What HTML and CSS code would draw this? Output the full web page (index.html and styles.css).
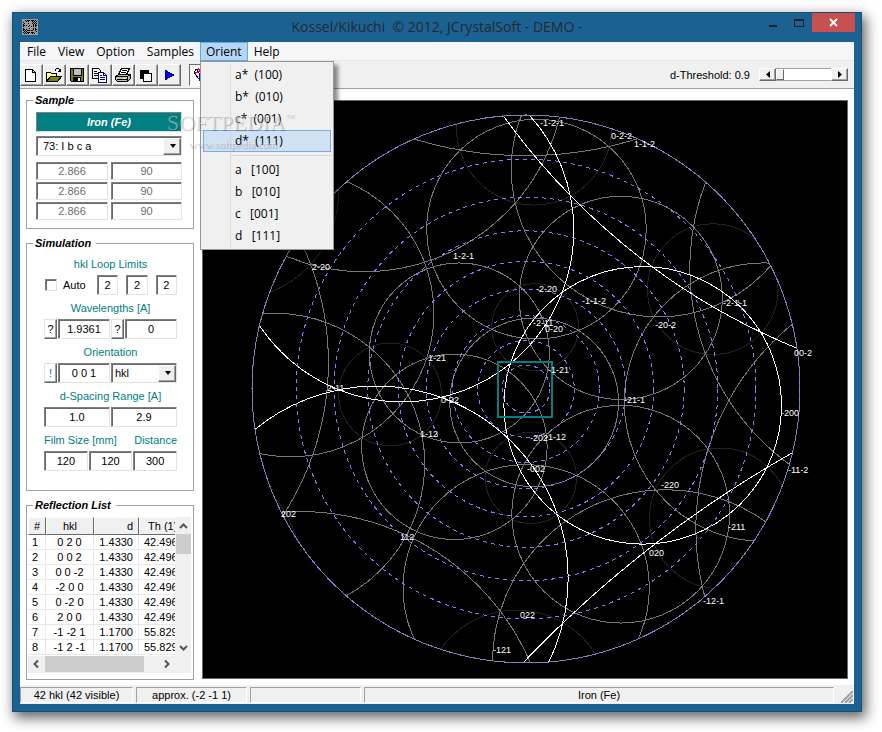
FILE: index.html
```html
<!DOCTYPE html>
<html lang="en">
<head>
<meta charset="utf-8">
<title>Kossel/Kikuchi</title>
<link rel="stylesheet" href="styles.css">
</head>
<body>
<div class="window">
  <header class="titlebar">
    <svg class="app-icon" viewBox="0 0 16 16" width="16" height="16" shape-rendering="crispEdges" aria-hidden="true">
      <rect width="16" height="16" fill="#000"/>
      <g fill="none" stroke="#9a9a9a">
        <rect x=".5" y=".5" width="15" height="15"/>
        <path d="M0 8.500H16M8.500 0V16M1 1L15 15M15 1L1 15"/>
        <circle cx="8" cy="8" r="5"/><circle cx="8" cy="8" r="2.500"/>
        <path stroke-dasharray="1 1" d="M4.500 1V15M12.500 1V15M1 4.500H15M1 12.500H15M2.500 1V15M14 1V15M1 2.500H15M1 14H15"/>
      </g>
    </svg>
    <h1 class="title">Kossel/Kikuchi&nbsp; © 2012, JCrystalSoft - DEMO -</h1>
    <div class="window-buttons">
      <button type="button" aria-label="Minimize"><svg width="10" height="14"><rect x="1" y="9" width="8" height="2" fill="#222"/></svg></button>
      <button type="button" aria-label="Maximize"><svg width="10" height="14"><path d="M0 3.500H10M.5 3V10.500H9.500V3M0 4.500H10" fill="none" stroke="#222" shape-rendering="crispEdges"/></svg></button>
      <button type="button" class="close" aria-label="Close"><svg width="9" height="9" viewBox="0 0 9 9"><path d="M1 1L8 8M8 1L1 8" stroke="#fff" stroke-width="1.800"/></svg></button>
    </div>
  </header>

  <nav class="menubar">
    <button type="button">File</button>
    <button type="button">View</button>
    <button type="button">Option</button>
    <button type="button">Samples</button>
    <div class="menu-anchor">
      <button type="button" class="open" aria-expanded="true">Orient</button>
      <div class="dropdown" role="menu">
        <button type="button" role="menuitem">a*&nbsp; (100)</button>
        <button type="button" role="menuitem">b*&nbsp; (010)</button>
        <button type="button" role="menuitem">c*&nbsp; (001)</button>
        <button type="button" role="menuitem" class="hot">d*&nbsp; (111)</button>
        <hr>
        <button type="button" role="menuitem">a&nbsp;&nbsp; [100]</button>
        <button type="button" role="menuitem">b&nbsp;&nbsp; [010]</button>
        <button type="button" role="menuitem">c&nbsp;&nbsp; [001]</button>
        <button type="button" role="menuitem">d&nbsp;&nbsp; [111]</button>
      </div>
    </div>
    <button type="button">Help</button>
  </nav>

  <div class="toolbar">
    <div class="tools">
      <button type="button" aria-label="New"><svg width="16" height="16" shape-rendering="crispEdges"><path d="M2.500 2.500H9.500L12.500 5.500V14.500H2.500Z" fill="#fff" stroke="#000"/><path d="M9.500 2.500V5.500H12.500" fill="none" stroke="#000"/></svg></button>
      <button type="button" aria-label="Open"><svg width="16" height="16" shape-rendering="crispEdges"><path d="M.5 14.500V5.500H4.500L5.500 6.500H10.500V9" fill="#ffff80" stroke="#000"/><path d="M.5 14.500L4.500 9.500H15.500L11.500 14.500Z" fill="#808000" stroke="#000"/><path d="M9 3.500L10.500 1.500H12.500L14.500 4M12 4.500H15M14.500 2V5" fill="none" stroke="#000"/></svg></button>
      <button type="button" aria-label="Save"><svg width="16" height="16" shape-rendering="crispEdges"><path d="M1.500 1.500H14.500V14.500H2.500L1.500 13.500Z" fill="#808000" stroke="#000"/><rect x="4" y="1" width="8" height="7" fill="#c0c0c0" stroke="#000"/><rect x="4" y="10" width="8" height="5"/><rect x="9" y="11" width="2" height="3" fill="#fff"/></svg></button>
      <button type="button" aria-label="Copy"><svg width="16" height="16" shape-rendering="crispEdges"><path d="M.5 1.500H6.500L8.500 3.500V11.500H.5Z" fill="#fff" stroke="#000"/><path d="M2 4.500H5M2 6.500H7M2 8.500H7" stroke="#000"/><path d="M6.500 5.500H11.500L14.500 8.500V15.500H6.500Z" fill="#fff" stroke="#000080"/><path d="M11.500 5.500V8.500H14.500" fill="none" stroke="#000080"/><path d="M8 8.500H10M8 10.500H13M8 12.500H13" stroke="#000080"/></svg></button>
      <button type="button" aria-label="Print"><svg width="17" height="16" shape-rendering="crispEdges"><path d="M6.500 1.500H14.500L11.500 7.500H3.500Z" fill="#fff" stroke="#000"/><path d="M7 3.500H12M6 5.500H11" stroke="#000"/><path d="M.5 9.500L3.500 7.500H15.500V11.500L12.500 14.500H2.500L.5 12.500Z" fill="#c0c0c0" stroke="#000"/><path d="M.5 9.500H12.500V14M12.500 9.500L15 7.500M2 12.500H12" fill="none" stroke="#000"/><rect x="8" y="11" width="3" height="1" fill="#ff0"/></svg></button>
      <button type="button" aria-label="Invert"><svg width="16" height="16" shape-rendering="crispEdges"><rect x="2" y="3" width="9" height="9"/><rect x="5.500" y="6.500" width="8" height="8" fill="#fff" stroke="#000"/></svg></button>
      <button type="button" aria-label="Run"><svg width="16" height="16" shape-rendering="crispEdges"><path d="M4.500 3.500L12.500 8L4.500 12.500Z" fill="#00f" stroke="#000080"/></svg></button>
    </div>
    <button type="button" class="tool-down" aria-label="Net"><svg width="16" height="16" shape-rendering="crispEdges"><path d="M3 2.500H16M3.500 2L2.500 6L6 11L12 15.500" fill="none" stroke="#000"/><path d="M3 6L8 4L14 14M6 2L14 8" fill="none" stroke="red" stroke-width="1.500"/><path d="M5 3L8 8L7 14M12 2L8 8" fill="none" stroke="#00f"/></svg></button>
    <div class="threshold">
      <label for="threshold">d-Threshold: 0.9</label>
      <div class="scroller">
        <button type="button" class="step" aria-label="Decrease"><svg width="4" height="7"><path d="M4 0V7L0 3.500Z"/></svg></button>
        <input type="range" id="threshold" min="0" max="100" value="0">
        <button type="button" class="step" aria-label="Increase"><svg width="4" height="7"><path d="M0 0V7L4 3.500Z"/></svg></button>
      </div>
    </div>
  </div>

  <main class="content">
    <div class="sidebar">
      <fieldset class="sample">
        <legend>Sample</legend>
        <div class="sample-name">Iron (Fe)</div>
        <div class="combo"><select aria-label="Space group"><option>73: I b c a</option></select></div>
        <div class="cell-grid">
          <input aria-label="a" value="2.866" disabled><input aria-label="alpha" value="90" disabled>
          <input aria-label="b" value="2.866" disabled><input aria-label="beta" value="90" disabled>
          <input aria-label="c" value="2.866" disabled><input aria-label="gamma" value="90" disabled>
        </div>
      </fieldset>

      <fieldset class="simulation">
        <legend>Simulation</legend>
        <div class="caption">hkl Loop Limits</div>
        <div class="row limits">
          <label class="auto"><input type="checkbox">Auto</label>
          <input aria-label="h limit" value="2"><input aria-label="k limit" value="2"><input aria-label="l limit" value="2">
        </div>
        <div class="caption">Wavelengths [A]</div>
        <div class="row">
          <button type="button">?</button><input aria-label="Wavelength 1" value="1.9361">
          <button type="button">?</button><input aria-label="Wavelength 2" value="0">
        </div>
        <div class="caption">Orientation</div>
        <div class="row">
          <button type="button" class="blue">!</button><input class="orient" aria-label="Orientation" value="0 0 1">
          <div class="combo"><select aria-label="Orientation mode"><option>hkl</option></select></div>
        </div>
        <div class="caption">d-Spacing Range [A]</div>
        <div class="row">
          <input aria-label="d minimum" value="1.0"><input aria-label="d maximum" value="2.9">
        </div>
        <div class="caption split"><span>Film Size [mm]</span><span>Distance</span></div>
        <div class="row">
          <input aria-label="Film width" value="120"><input aria-label="Film height" value="120"><input aria-label="Distance" value="300">
        </div>
      </fieldset>

      <fieldset class="reflections">
        <legend>Reflection List</legend>
        <div class="list">
          <div class="table-view">
            <table>
              <colgroup><col class="c-num"><col class="c-hkl"><col class="c-d"><col class="c-th"></colgroup>
              <thead><tr><th>#</th><th>hkl</th><th class="right">d</th><th>Th (1)</th></tr></thead>
              <tbody>
                <tr><td>1</td><td>0 2 0</td><td>1.4330</td><td>42.496</td></tr>
                <tr><td>2</td><td>0 0 2</td><td>1.4330</td><td>42.496</td></tr>
                <tr><td>3</td><td>0 0 -2</td><td>1.4330</td><td>42.496</td></tr>
                <tr><td>4</td><td>-2 0 0</td><td>1.4330</td><td>42.496</td></tr>
                <tr><td>5</td><td>0 -2 0</td><td>1.4330</td><td>42.496</td></tr>
                <tr><td>6</td><td>2 0 0</td><td>1.4330</td><td>42.496</td></tr>
                <tr><td>7</td><td>-1 -2 1</td><td>1.1700</td><td>55.829</td></tr>
                <tr><td>8</td><td>-1 2 -1</td><td>1.1700</td><td>55.829</td></tr>
              </tbody>
            </table>
          </div>
          <div class="vscroll">
            <svg width="9" height="17"><path d="M1 11L4.500 7.500L8 11" fill="none" stroke="#555" stroke-width="2"/></svg>
            <div class="vthumb"></div>
            <svg class="end" width="9" height="17"><path d="M1 7L4.500 10.500L8 7" fill="none" stroke="#555" stroke-width="2"/></svg>
          </div>
          <div class="hscroll">
            <svg width="17" height="16"><path d="M10 4.500L6.500 8L10 11.500" fill="none" stroke="#555" stroke-width="2"/></svg>
            <div class="hthumb"></div>
            <svg class="end" width="17" height="16"><path d="M7 4.500L10.500 8L7 11.500" fill="none" stroke="#555" stroke-width="2"/></svg>
          </div>
        </div>
      </fieldset>
    </div>

    <div class="canvas">
      <svg id="pattern" viewBox="203 101 644 577" role="img" aria-label="Kossel pattern">
        <clipPath id="hemisphere"><circle cx="526" cy="389" r="274"/></clipPath>
        <g id="cones" clip-path="url(#hemisphere)"></g>
        <g id="grid"></g>
        <rect class="film" x="498" y="362" width="54" height="55"/>
        <g id="labels"></g>
      </svg>
    </div>
  </main>

  <footer class="statusbar">
    <div class="status">42 hkl (42 visible)</div>
    <div class="status">approx. (-2 -1 1)</div>
    <div class="status"></div>
    <div class="status wide">Iron (Fe)</div>
    <svg class="grip" width="12" height="12"><path d="M0 12L12 0M4 12L12 4M8 12L12 8" stroke="#a0a0a0" stroke-width="2"/></svg>
  </footer>
  <div class="watermark"><b>SOFTPEDIA<sup>™</sup></b><span>www.softpedia.com</span></div>
</div>
<script src="pattern.js"></script>
</body>
</html>
```
FILE: styles.css
```css
* { box-sizing: border-box; }
body {
  margin: 0;
  padding: 12px 20px 20px 12px;
  background: #fff;
  font: 11px/14px "Liberation Sans", Arial, sans-serif;
  color: #000;
}
button, input, select { font: inherit; color: inherit; margin: 0; padding: 0; border-radius: 0; }
button { border: 0; background: none; }
svg { display: block; }

.window {
  position: relative;
  display: flex;
  flex-direction: column;
  min-height: calc(100vh - 32px);
  padding: 0 8px 8px;
  background: #1b6293;
  box-shadow: inset 0 0 0 1px #164f78, 3px 5px 12px 1px rgba(0, 0, 0, .6);
}

.titlebar { display: grid; grid-template-columns: 1fr auto 1fr; height: 30px; }
.app-icon { margin: 7px 0 0 2px; }
.title {
  margin: 0;
  font: 14px/30px "Open Sans", "Noto Sans", sans-serif;
  color: #222a30;
}
.window-buttons { display: flex; justify-content: flex-end; align-items: flex-start; padding-top: 1px; margin-right: -1px; }
.window-buttons button { display: grid; place-items: center; width: 26px; height: 19px; }
.window-buttons .close { width: 43px; background: #c75050; }

.menubar { display: flex; height: 19px; padding-left: 1px; background: #f5f6f8; border-bottom: 1px solid #e6e6e6; font: 12px/18px "Open Sans", "Noto Sans", sans-serif; }
.menubar > button, .open { height: 19px; padding: 0 6px; }
.open { border: 1px solid #66a7e8; padding: 0 5px; background: #b5d7f7; line-height: 16px; }
.menu-anchor { position: relative; }
.dropdown {
  position: absolute;
  z-index: 2;
  top: 19px;
  left: 0;
  width: 134px;
  padding: 2px;
  border: 1px solid #979797;
  background: linear-gradient(#dcdcdc, #dcdcdc) 29px 2px / 1px calc(100% - 4px) no-repeat #f0f0f0;
  box-shadow: 4px 4px 4px rgba(0, 0, 0, .45);
}
.dropdown button { display: block; width: 100%; height: 22px; padding-left: 31px; border: 1px solid transparent; text-align: left; line-height: 20px; }
.dropdown .hot { border-color: #78aee5; background: rgba(175, 210, 245, .5); }
.dropdown hr { height: 1px; margin: 3px 0 3px 28px; border: 0; background: #d7d7d7; }

.toolbar { display: flex; align-items: center; height: 28px; padding-right: 6px; background: #f0f0f0; border-bottom: 1px solid #a0a0a0; }
.tools { display: flex; }
.tools button, .tool-down { display: grid; place-items: center; width: 23px; height: 22px; padding-right: 1px; }
.tools button { border: 1px solid; border-color: #fff #696969 #696969 #fff; box-shadow: inset -1px -1px #a0a0a0; }
.tool-down { margin-left: 8px; border: 1px solid; border-color: #696969 #fff #fff #696969; background: #fafafa; }
.threshold { display: flex; align-items: center; gap: 9px; margin-left: auto; }
.scroller { display: flex; width: 89px; height: 13px; }
.step { display: grid; place-items: center; width: 17px; border: 1px solid; border-color: #fff #696969 #696969 #fff; box-shadow: inset -1px -1px #a0a0a0; background: #f0f0f0; }
.scroller input { flex: 1; min-width: 0; appearance: none; background: #fff; border: 1px solid #a0a0a0; border-width: 1px 0; }
.scroller input::-webkit-slider-thumb { appearance: none; width: 8px; height: 11px; border: 1px solid; border-color: #fff #696969 #696969 #fff; background: #f0f0f0; }

.content { display: flex; flex: 1; gap: 8px; padding: 5px 6px; background: #fff; }
.sidebar { display: flex; flex-direction: column; gap: 8px; flex: 0 0 168px; }
fieldset { min-width: 0; margin: 0; border: 1px solid #a0a0a0; }
legend { padding: 0 2px; font-weight: bold; font-style: italic; line-height: 13px; }
.sample legend { margin-left: -3px; }
.simulation legend { margin-left: -11px; padding-right: 5px; }
.reflections legend { margin-left: 5px; padding-right: 5px; }
.sample { padding: 5px 11px 8px 9px; }
.sample-name {
  margin-bottom: 4px;
  border: 1px solid;
  border-color: #808080 #e3e3e3 #e3e3e3 #808080;
  background: #008080;
  color: #fff;
  font-weight: bold;
  font-style: italic;
  line-height: 18px;
  text-align: center;
}
input:not([type]) {
  width: 100%;
  min-width: 0;
  height: 20px;
  border: 1px solid;
  border-color: #808080 #e3e3e3 #e3e3e3 #808080;
  box-shadow: inset 1px 1px #696969;
  background: #fff;
  text-align: center;
}
.cell-grid { display: grid; grid-template-columns: 72px 1fr; gap: 2px 3px; margin-top: 6px; }
.cell-grid input:not([type]) { height: 18px; color: #6d6d6d; }
.combo { position: relative; height: 20px; }
.combo select {
  appearance: none;
  width: 100%;
  height: 20px;
  padding-left: 6px;
  border: 1px solid;
  border-color: #808080 #e3e3e3 #e3e3e3 #808080;
  box-shadow: inset 1px 1px #696969;
  background: #fff;
}
.row .combo select { padding-left: 3px; }
.combo::before {
  content: "";
  position: absolute;
  top: 2px; right: 1px; bottom: 1px;
  width: 16px;
  border: 1px solid;
  border-color: #fff #696969 #696969 #fff;
  box-shadow: inset -1px -1px #a0a0a0;
  background: #f0f0f0;
  pointer-events: none;
}
.combo::after {
  content: "";
  position: absolute;
  top: 8px; right: 6px;
  border: solid transparent;
  border-width: 4px 3px 0;
  border-top-color: #000;
  pointer-events: none;
}

.simulation { padding: 7px 16px 19px 17px; }
.caption { margin: 6px 0 4px; color: #008080; text-align: center; }
.simulation .caption:first-of-type { margin-top: 0; }
.split { display: flex; justify-content: space-between; }
.row { display: flex; gap: 1px; }
.row button { flex: 0 0 13px; height: 20px; border: 1px solid; border-color: #e3e3e3 #696969 #696969 #e3e3e3; box-shadow: inset -1px -1px #a0a0a0; background: #fff; }
.row .blue { color: #1a64b4; }
.row .combo { flex: 0 0 66px; }
.limits { gap: 8px; padding-left: 1px; }
.auto { display: flex; align-items: center; gap: 6px; flex: 0 0 44px; }
.auto input { flex: 0 0 12px; appearance: none; width: 12px; height: 12px; border: 1px solid; border-color: #808080 #e3e3e3 #e3e3e3 #808080; box-shadow: inset 1px 1px #696969; }

.reflections { padding: 5px 2px 6px 1px; }
.list { display: grid; grid-template: 139px 17px / 1fr 16px; background: #f0f0f0; }
.table-view { overflow: hidden; background: #fff; }
table { width: 165px; table-layout: fixed; border-collapse: separate; border-spacing: 0; }
.c-num { width: 18px; } .c-hkl { width: 48px; } .c-d { width: 45px; }
th { height: 18px; padding: 0 5px; border: 1px solid; border-color: #fff #696969 #696969 #fff; background: #f0f0f0; font-weight: normal; white-space: nowrap; }
th:first-child { padding: 0; }
th:last-child { text-align: left; padding-left: 8px; }
.right { text-align: right; }
td { height: 15px; padding: 0 5px; border: solid #e8e8e8; border-width: 0 1px 1px 0; text-align: center; white-space: nowrap; line-height: 14px; }
td:first-child { padding: 0 4px; text-align: left; }
td:nth-child(3) { text-align: right; }
td:last-child { text-align: left; }
.vscroll { display: flex; flex-direction: column; align-items: center; }
.vthumb { width: 15px; height: 20px; background: #cdcdcd; }
.vscroll .end { margin-top: auto; }
.hscroll { display: flex; }
.hthumb { width: 99px; height: 16px; background: #cdcdcd; }
.hscroll .end { margin-left: auto; }

.canvas { flex: 1; min-width: 0; margin: 6px 0 1px; border: 1px solid #696969; background: #000; display: flex; }
#pattern { flex: 1; min-width: 0; }
#pattern circle { fill: none; shape-rendering: crispEdges; }
.weak { stroke: #222; }
.medium { stroke: #777; }
.strong { stroke: #fff; }
.ring { stroke: #8080ff; stroke-dasharray: 4 4; }
.rim { stroke: #808080; }
.film { fill: none; stroke: #008080; stroke-width: 2; shape-rendering: crispEdges; }
#labels { fill: #fff; font-size: 9px; }

.statusbar { display: flex; gap: 3px; height: 19px; padding: 2px 0 1px; background: #f0f0f0; }
.status { flex: 0 0 113px; border: 1px solid; border-color: #a0a0a0 #fff #fff #a0a0a0; text-align: center; }
.status:nth-child(2), .status:nth-child(3) { flex-basis: 111px; }
.status.wide { flex: 1; }
.grip { flex: 0 0 12px; margin: 4px 1px 0 4px; }

.watermark {
  position: absolute;
  z-index: 3;
  top: 91px;
  left: 155px;
  color: rgba(255, 255, 255, .4);
  text-shadow: 1px 1px 1px rgba(0, 0, 0, .25);
  pointer-events: none;
  white-space: nowrap;
}
.watermark b { display: block; font: 22px/28px "Liberation Serif", serif; }
.watermark sup { font-size: 9px; vertical-align: 10px; }
.watermark span { display: block; margin: 0 0 0 22px; font: 11px/14px "Liberation Serif", serif; }
```
FILE: pattern.js
```js
// Stereographic projection of the diffraction cones of a cubic crystal.
const SVG = "http://www.w3.org/2000/svg";
const CENTER = { x: 526, y: 389 };
const RADIUS = 274;

// Crystal axes in the viewing frame (x right, y up, z toward the viewer).
const AXES = [
  [0.620, -0.087, 0.780],
  [-0.532, 0.682, 0.502],
  [-0.575, -0.726, 0.378]
];

function add(parent, name, attributes, text) {
  const node = document.createElementNS(SVG, name);
  for (const key in attributes) node.setAttribute(key, attributes[key]);
  if (text) node.textContent = text;
  document.getElementById(parent).appendChild(node);
}

// Every sign and order of the indices whose squares add up to the given sum.
function family(sum) {
  const list = [];
  for (let h = -2; h <= 2; h++)
    for (let k = -2; k <= 2; k++)
      for (let l = -2; l <= 2; l++)
        if (h * h + k * k + l * l === sum) list.push([h, k, l]);
  return list;
}

function drawCones(sum, theta, style) {
  const cos = Math.sin(theta * Math.PI / 180);
  const sin = Math.cos(theta * Math.PI / 180);
  for (const hkl of family(sum)) {
    const pole = [0, 1, 2].map(i =>
      hkl.reduce((total, index, axis) => total + index * AXES[axis][i], 0) / Math.sqrt(sum));
    // A cone that lies wholly behind the equator has nothing to draw.
    if (pole[2] <= -sin) continue;
    const scale = RADIUS / (cos + pole[2]);
    add("cones", "circle", {
      class: style,
      cx: CENTER.x + pole[0] * scale,
      cy: CENTER.y - pole[1] * scale,
      r: Math.abs(sin * scale)
    });
  }
}

drawCones(8, 72.82, "weak");
drawCones(6, 55.829, "medium");
drawCones(4, 42.496, "strong");

for (let angle = 10; angle <= 80; angle += 10) {
  add("grid", "circle", { class: "ring", cx: CENTER.x, cy: CENTER.y, r: RADIUS * Math.tan(angle * Math.PI / 360) });
}
add("grid", "circle", { class: "rim", cx: CENTER.x, cy: CENTER.y, r: RADIUS });
add("grid", "circle", { class: "ring", cx: CENTER.x, cy: CENTER.y, r: RADIUS });
add("grid", "rect", { x: 525, y: 388, width: 2, height: 1, fill: "#8080ff" });

const LABELS = [
  ["-1-2-1", 540, 126], ["0-2-2", 611, 139], ["1-1-2", 634, 147], ["1-2-1", 453, 259],
  ["2-20", 312, 270], ["-2-20", 536, 292], ["-1-1-2", 582, 304], ["-2-1-1", 723, 306],
  ["-20-2", 655, 328], ["-2-11", 533, 326], ["0-20", 545, 332], ["00-2", 794, 356],
  ["-1-21", 548, 373], ["1-21", 428, 361], ["2-11", 327, 391], ["0-22", 441, 403],
  ["-21-1", 624, 403], ["-200", 781, 416], ["-11-2", 788, 473], ["1-12", 420, 437],
  ["-202", 530, 441], ["-1-12", 545, 440], ["-002", 527, 472], ["-220", 661, 488],
  ["-211", 728, 530], ["020", 649, 556], ["-12-1", 703, 604], ["202", 281, 517],
  ["112", 400, 540], ["022", 520, 618], ["-121", 493, 653]
];
for (const [text, x, y] of LABELS) add("labels", "text", { x, y }, text);
```
